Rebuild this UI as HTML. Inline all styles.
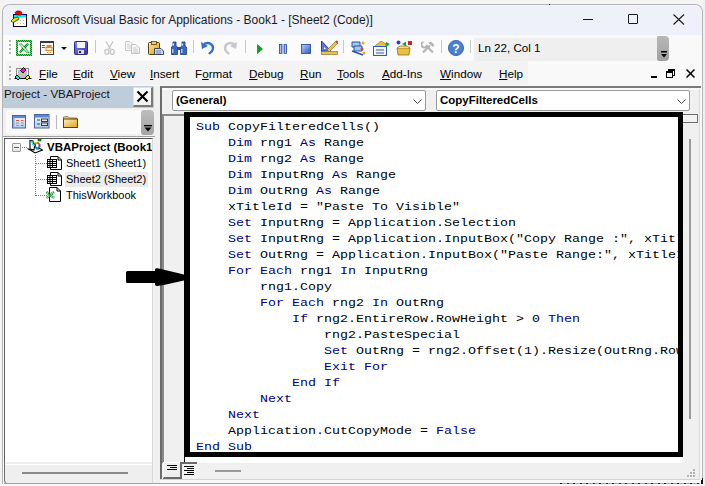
<!DOCTYPE html>
<html><head><meta charset="utf-8">
<style>
*{margin:0;padding:0;box-sizing:border-box}
html,body{width:705px;height:486px;overflow:hidden;background:#f4f4f4;font-family:"Liberation Sans",sans-serif;color:#000;position:relative}
.a{position:absolute}
.t{font-size:12px;white-space:pre;line-height:14px}
.m{font-size:11.7px;white-space:pre;line-height:14px}
.code{font-family:"Liberation Mono",monospace;font-size:13.333px;line-height:16px;white-space:pre;color:#000}
.k{color:#00007f}
.ln{height:16px;transform-origin:0 11px;transform:scaleY(.86)}
.sep{width:1px;height:13px;background:#c8c8c8}
</style></head><body>
<!-- window frame -->
<div class="a" style="left:2px;top:4px;width:701px;height:480px;border:1px solid #b4b4b4;border-bottom:none;border-radius:8px 8px 0 0;background:#f0f0f0"></div>
<div class="a" style="left:3px;top:5px;width:699px;height:30px;background:#eef1f9;border-radius:7px 7px 0 0"></div>
<!-- title -->
<svg class="a" style="left:10px;top:10px" width="18" height="18" viewBox="0 0 18 18"><rect x="3.5" y="4.5" width="13" height="12" fill="#fff" stroke="#000"/><rect x="3" y="4" width="14" height="1" fill="#000080"/><rect x="4" y="5" width="12" height="2.5" fill="#00f0f0"/><path d="M5 2.5 L7 1 L10 1 L12 2.5 L11 5 L6.5 5Z" fill="#f00000" stroke="#400000" stroke-width=".6"/><path d="M1 11 L4 8 L8 7 L9 9 L6 11 L3 12.5Z" fill="#e8e800" stroke="#202000" stroke-width=".7"/><path d="M5 10.5 L8.5 8.5 L9.5 9.5 L6 11.5Z" fill="#808000"/><g fill="#b8b8b8"><rect x="10" y="10" width="1" height="1"/><rect x="13" y="10" width="1" height="1"/><rect x="7" y="13" width="1" height="1"/><rect x="10" y="13" width="1" height="1"/><rect x="13" y="13" width="1" height="1"/></g></svg>
<div class="a t" style="left:31px;top:13px;color:#1a1a1a">Microsoft Visual Basic for Applications - Book1 - [Sheet2 (Code)]</div>
<div class="a" style="left:583px;top:19px;width:10px;height:1px;background:#1a1a1a"></div>
<div class="a" style="left:628px;top:14px;width:10px;height:10px;border:1px solid #1a1a1a;border-radius:1px"></div>
<svg class="a" style="left:673px;top:14px" width="12" height="11" viewBox="0 0 12 11"><path d="M0.5 0.5 L11 10.5 M11 0.5 L0.5 10.5" stroke="#1a1a1a" stroke-width="1.1"/></svg>

<!-- toolbar band -->
<div class="a" style="left:3px;top:35px;width:699px;height:51px;background:#f9f9f9"></div>
<div class="a" style="left:6px;top:37px;width:468px;height:23px;background:#fbfbfb;border-radius:3px"></div>
<div class="a" style="left:6px;top:61px;width:522px;height:24px;background:#f3f3f3;border-radius:2px"></div>
<!-- grips -->
<svg class="a" style="left:9px;top:40px" width="3" height="17"><g fill="#b0b0b0"><rect x="0" y="0" width="2" height="2"/><rect x="0" y="4" width="2" height="2"/><rect x="0" y="8" width="2" height="2"/><rect x="0" y="12" width="2" height="2"/></g></svg>
<svg class="a" style="left:9px;top:66px" width="3" height="17"><g fill="#b0b0b0"><rect x="0" y="0" width="2" height="2"/><rect x="0" y="4" width="2" height="2"/><rect x="0" y="8" width="2" height="2"/><rect x="0" y="12" width="2" height="2"/></g></svg>

<!-- toolbar icons -->
<svg class="a" style="left:16px;top:40px" width="16" height="16" viewBox="0 0 16 16"><defs><pattern id="chk" width="2" height="2" patternUnits="userSpaceOnUse"><rect width="2" height="2" fill="#7cc07c"/><rect width="1" height="1" fill="#008a10"/><rect x="1" y="1" width="1" height="1" fill="#008a10"/></pattern></defs><rect x="0" y="0" width="16" height="16" fill="url(#chk)"/><rect x="2" y="2" width="12" height="12" fill="#fff"/><path d="M3 4 L5 3 L8 6 L11 3 L13 4 L10 8 L13 12 L14 13 L11 13 L8 10 L5 13 L3 12 L6 8Z" fill="url(#chk)"/><path d="M4.5 4.5 L11.5 12" stroke="#fff" stroke-width="1"/></svg>
<svg class="a" style="left:40px;top:41px" width="14" height="14" viewBox="0 0 14 14"><rect x="0.5" y="0.5" width="13" height="13" fill="#f8f8f8" stroke="#3a3a3a"/><rect x="0" y="0" width="14" height="2" fill="#3a3a3a"/><path d="M2 4.5 H5 M2 6.5 H5" stroke="#606060"/><rect x="6.5" y="4" width="5" height="2" fill="#d88a28"/><rect x="6" y="6.5" width="6" height="3" fill="#f8f0e0" stroke="#d88a28"/><path d="M7 11.5 H8.5 M9.5 11.5 H11" stroke="#d88a28"/></svg>
<svg class="a" style="left:61px;top:47px" width="6" height="3"><path d="M0 0 H6 L3 3Z" fill="#111"/></svg>
<svg class="a" style="left:74px;top:41px" width="14" height="14" viewBox="0 0 14 14"><defs><linearGradient id="gs" x1="0" y1="0" x2="1" y2="1"><stop offset="0" stop-color="#8a8ae8"/><stop offset="1" stop-color="#3030a0"/></linearGradient></defs><rect x="0.5" y="0.5" width="13" height="13" rx="1" fill="url(#gs)" stroke="#2a2a80"/><rect x="3" y="1" width="8" height="6" fill="#f4f4fa"/><rect x="4" y="9" width="6" height="4" fill="#d8d8e8"/><rect x="5" y="10" width="2" height="2" fill="#202040"/></svg>
<div class="a sep" style="left:95px;top:40px"></div>
<svg class="a" style="left:104px;top:41px" width="11" height="14" viewBox="0 0 11 14"><path d="M2 0.5 L6.5 8 M9 0.5 L4.5 8" stroke="#c4c4c4" stroke-width="1.3"/><ellipse cx="2.8" cy="10.8" rx="2" ry="2.5" fill="none" stroke="#c4c4c4" stroke-width="1.3"/><ellipse cx="8.2" cy="10.8" rx="2" ry="2.5" fill="none" stroke="#c4c4c4" stroke-width="1.3"/></svg>
<svg class="a" style="left:125px;top:41px" width="15" height="13" viewBox="0 0 15 13"><path d="M0.5 0.5 L5 0.5 L7.5 3 L7.5 9.5 L0.5 9.5Z" fill="#f8f8f8" stroke="#c8c8c8"/><path d="M2 3 H5 M2 5 H6 M2 7 H6" stroke="#d0d0d0"/><path d="M6.5 3.5 L11 3.5 L14.5 7 L14.5 12.5 L6.5 12.5Z" fill="#f8f8f8" stroke="#c0c0c0"/><path d="M8 7 H12 M8 9 H13 M8 11 H13" stroke="#c8c8c8"/></svg>
<svg class="a" style="left:148px;top:41px" width="16" height="14" viewBox="0 0 16 14"><defs><linearGradient id="gp" x1="0" y1="0" x2="1" y2="1"><stop offset="0" stop-color="#fff0a0"/><stop offset="1" stop-color="#d89010"/></linearGradient></defs><rect x="0.5" y="1.5" width="11" height="12" rx="1" fill="url(#gp)" stroke="#5a4010"/><rect x="3.5" y="0.5" width="5" height="3" fill="#e8d080" stroke="#5a4010" stroke-width=".8"/><path d="M6.5 7.5 L13 7.5 L15.5 10 L15.5 13.5 L6.5 13.5Z" fill="#c8d8f0" stroke="#404860"/><path d="M8 10 H13 M8 12 H13" stroke="#6a88b8"/></svg>
<svg class="a" style="left:171px;top:41px" width="16" height="14" viewBox="0 0 16 14"><path d="M2 1 L5 1 L5 5 L6.5 6 L6.5 13.5 L0.5 13.5 L0.5 6 L2 5Z" fill="#3868c0" stroke="#203a80" stroke-width=".8"/><path d="M11 1 L14 1 L14 5 L15.5 6 L15.5 13.5 L9.5 13.5 L9.5 6 L11 5Z" fill="#3868c0" stroke="#203a80" stroke-width=".8"/><rect x="6.5" y="6" width="3" height="3" fill="#2a4a90"/><path d="M2.5 2.5 V4.5 M1.8 8 V12 M11.5 2.5 V4.5 M10.8 8 V12" stroke="#e0ecff" stroke-width="1.1"/></svg>
<div class="a sep" style="left:193px;top:40px"></div>
<svg class="a" style="left:201px;top:41px" width="14" height="14" viewBox="0 0 14 14"><path d="M3 3 C 9 0, 14 5, 11 10 L8 13" fill="none" stroke="#3070c8" stroke-width="2.4"/><path d="M0 1 L1 8 L7 5Z" fill="#3070c8"/></svg>
<svg class="a" style="left:224px;top:41px" width="13" height="14" viewBox="0 0 13 14"><path d="M10 3 C 4 0, -1 5, 2 10 L5 13" fill="none" stroke="#c8c8c8" stroke-width="2.4"/><path d="M13 1 L12 8 L6 5Z" fill="#c8c8c8"/></svg>
<div class="a sep" style="left:245px;top:40px"></div>
<svg class="a" style="left:257px;top:44px" width="6" height="10"><path d="M0.5 0.5 L5.5 5 L0.5 9.5Z" fill="#10a020" stroke="#087010" stroke-width=".6"/></svg>
<svg class="a" style="left:279px;top:44px" width="8" height="10"><defs><linearGradient id="gpz" x1="0" y1="0" x2="1" y2="0"><stop offset="0" stop-color="#2a5ac0"/><stop offset=".5" stop-color="#c8dcff"/><stop offset="1" stop-color="#2a5ac0"/></linearGradient></defs><rect x="0.5" y="0.5" width="2.5" height="9" fill="url(#gpz)" stroke="#2040a0" stroke-width=".7"/><rect x="5" y="0.5" width="2.5" height="9" fill="url(#gpz)" stroke="#2040a0" stroke-width=".7"/></svg>
<svg class="a" style="left:301px;top:44px" width="10" height="10"><defs><linearGradient id="gst" x1="0" y1="0" x2="1" y2="1"><stop offset="0" stop-color="#b8d0ff"/><stop offset="1" stop-color="#2a58c0"/></linearGradient></defs><rect x="0.5" y="0.5" width="9" height="9" fill="url(#gst)" stroke="#2040a0" stroke-width=".8"/></svg>
<svg class="a" style="left:321px;top:40px" width="17" height="15" viewBox="0 0 17 15"><path d="M0.5 1 L0.5 11 L10 11Z" fill="#5a7ad8" stroke="#2040a0"/><path d="M3 7 L3 9 L5 9Z" fill="#fff"/><path d="M6 10 L15 1 L17 3 L8 12Z" fill="#f0c040" stroke="#806020" stroke-width=".6"/><path d="M15 1 L17 3" stroke="#d04040" stroke-width="2"/><rect x="0.5" y="11.5" width="16" height="3" fill="#e8c050" stroke="#806020" stroke-width=".6"/></svg>
<div class="a sep" style="left:343px;top:40px"></div>
<svg class="a" style="left:351px;top:40px" width="15" height="16" viewBox="0 0 15 16"><path d="M1 2 L9 2 L9 7 L1 7Z" fill="#a0c8f0" stroke="#2850a8"/><path d="M3 6 L11 6 L11 11 L3 11Z" fill="#a0c8f0" stroke="#2850a8"/><path d="M1 11 L12 15" stroke="#3050a0" stroke-width="1.5"/><circle cx="12" cy="3" r="1.5" fill="#f0a020"/><circle cx="11" cy="9" r="1.5" fill="#e04020"/><circle cx="13" cy="13" r="1.5" fill="#f0a020"/></svg>
<svg class="a" style="left:373px;top:41px" width="17" height="15" viewBox="0 0 17 15"><rect x="0.5" y="5.5" width="13" height="9" fill="#f4f4f4" stroke="#3060b0"/><path d="M3 9 H11 M3 12 H11" stroke="#3060b0"/><path d="M2 5 L8 0 L13 3 L13 5" fill="#f0c040" stroke="#806020" stroke-width=".6"/><path d="M13 1 L17 3 L13 6Z" fill="#20a040"/></svg>
<svg class="a" style="left:396px;top:40px" width="16" height="16" viewBox="0 0 16 16"><circle cx="2.5" cy="2.5" r="2" fill="#3040c0"/><path d="M6 4 L10 1.5 L10 6.5Z" fill="#20a040"/><rect x="12" y="1" width="4" height="4" fill="#d02020"/><path d="M1 8 L14 8 L13 15 L2 15Z" fill="#e8c040" stroke="#806020" stroke-width=".7"/><path d="M1 8 L4 6 L11 6 L14 8" fill="#f8e080" stroke="#806020" stroke-width=".7"/></svg>
<svg class="a" style="left:421px;top:41px" width="14" height="13" viewBox="0 0 14 13"><path d="M2 11.5 L9 4.5" stroke="#b4b4b4" stroke-width="2.2"/><path d="M12 11.5 L5 4.5" stroke="#b4b4b4" stroke-width="2.2"/><path d="M2.5 1 A2.8 2.8 0 1 0 6 4" fill="none" stroke="#b0b0b0" stroke-width="1.8"/><path d="M7 1.5 L10 0.8 L13.5 4 L12 6 L9 3.5Z" fill="#b4b4b4"/></svg>
<div class="a sep" style="left:441px;top:40px"></div>
<svg class="a" style="left:448px;top:40px" width="16" height="16" viewBox="0 0 16 16"><circle cx="8" cy="8" r="7.6" fill="#4a80d0" stroke="#2a58a8" stroke-width=".8"/><text x="8" y="12.5" font-family="Liberation Sans" font-weight="bold" font-size="12" fill="#fff" text-anchor="middle">?</text></svg>
<div class="a sep" style="left:470px;top:40px"></div>
<!-- status box -->
<div class="a" style="left:474px;top:38px;width:184px;height:23px;background:#efefef"></div>
<div class="a m" style="left:478px;top:41px;font-size:11.6px">Ln 22, Col 1</div>
<div class="a" style="left:657px;top:36px;width:12px;height:25px;background:linear-gradient(#b8b8b8,#a0a0a0);border-radius:1px 4px 4px 2px"></div>
<svg class="a" style="left:661px;top:51px" width="6" height="7"><rect x="0" y="0" width="6" height="1.5" fill="#000"/><path d="M0 3 H6 L3 6.5Z" fill="#000"/></svg>

<!-- menu -->
<svg class="a" style="left:14px;top:67px" width="18" height="15" viewBox="0 0 18 15"><rect x="2.5" y="1.5" width="12" height="10" fill="#fff" stroke="#8a8a8a" stroke-width="1"/><path d="M4 3 L13 3 L13 11 L4 11Z" fill="#c0c0c0"/><path d="M5 11 L12 11 L12 12 L5 12Z" fill="#fff"/><path d="M0.5 11.5 H17.5" stroke="#000" stroke-width="1"/><path d="M6.5 3.5 L9.5 0.5 L12 3 L9 6Z" fill="#ff00ff" stroke="#000" stroke-width=".9"/><path d="M1 10 L3 8 L6 11 L4 13Z" fill="#00f0f0" stroke="#000" stroke-width=".9"/><path d="M11 11 L14 8 L16 10 L13 13Z" fill="#f8f000" stroke="#000" stroke-width=".9"/></svg>
<div class="a m" style="left:39px;top:67px"><u>F</u>ile</div>
<div class="a m" style="left:73px;top:67px"><u>E</u>dit</div>
<div class="a m" style="left:110px;top:67px"><u>V</u>iew</div>
<div class="a m" style="left:150px;top:67px"><u>I</u>nsert</div>
<div class="a m" style="left:195px;top:67px">F<u>o</u>rmat</div>
<div class="a m" style="left:249px;top:67px"><u>D</u>ebug</div>
<div class="a m" style="left:300px;top:67px"><u>R</u>un</div>
<div class="a m" style="left:337px;top:67px"><u>T</u>ools</div>
<div class="a m" style="left:382px;top:67px"><u>A</u>dd-Ins</div>
<div class="a m" style="left:440px;top:67px"><u>W</u>indow</div>
<div class="a m" style="left:499px;top:67px"><u>H</u>elp</div>
<div class="a" style="left:651px;top:76px;width:6px;height:2px;background:#000"></div>
<svg class="a" style="left:666px;top:69px" width="9" height="9"><rect x="2.5" y="0.5" width="6" height="6" fill="none" stroke="#000"/><rect x="0.5" y="2.5" width="6" height="6" fill="#f3f3f3" stroke="#000"/><rect x="0" y="2" width="7" height="2" fill="#000"/><rect x="2" y="0" width="7" height="2" fill="#000"/></svg>
<svg class="a" style="left:686px;top:69px" width="9" height="9"><path d="M0.5 0.5 L8.5 8.5 M8.5 0.5 L0.5 8.5" stroke="#000" stroke-width="1.5"/></svg>

<!-- project pane -->
<div class="a" style="left:3px;top:86px;width:151px;height:22px;background:#bfcdda"></div>
<div class="a m" style="left:4px;top:87px;font-size:11.6px;color:#1a1020">Project - VBAProject</div>
<div class="a" style="left:133px;top:87px;width:20px;height:20px;background:linear-gradient(#fff,#f0f0f0);border:1px solid #e0e0e0;border-right:2px solid #7a7a7a;border-bottom:2px solid #7a7a7a"></div>
<svg class="a" style="left:136px;top:90px" width="13" height="13"><path d="M1.5 1.5 L11.5 11.5 M11.5 1.5 L1.5 11.5" stroke="#000" stroke-width="2.1"/></svg>
<div class="a" style="left:6px;top:110px;width:137px;height:24px;background:#fafafa;border-radius:3px"></div>
<div class="a" style="left:141px;top:110px;width:13px;height:25px;background:linear-gradient(#bdbdbd,#a4a4a4);border-radius:3px 4px 4px 3px"></div>
<svg class="a" style="left:144px;top:125px" width="8" height="7"><rect x="0" y="0" width="8" height="1.3" fill="#000"/><path d="M0.5 2.5 H7.5 L4 6.5Z" fill="#000"/></svg>
<svg class="a" style="left:12px;top:115px" width="15" height="14" viewBox="0 0 15 14"><defs><linearGradient id="gb" x1="0" y1="0" x2="0" y2="1"><stop offset="0" stop-color="#f4f8fe"/><stop offset="1" stop-color="#b8cdec"/></linearGradient></defs><rect x="0.5" y="0.5" width="13" height="12.5" fill="url(#gb)" stroke="#4a64a0"/><rect x="1" y="1" width="12" height="2" fill="#5a88dc"/><rect x="1" y="3" width="1.5" height="9.5" fill="#9aaac0"/><path d="M4 5.5 H7 M9 5.5 H11.5" stroke="#f05028"/><path d="M4 8 H7 M9 8 H11.5" stroke="#7a90b0"/><path d="M4 10.5 H7" stroke="#8a98b0"/><path d="M9 10.5 H11.5" stroke="#f05028"/></svg>
<svg class="a" style="left:34px;top:114px" width="16" height="15" viewBox="0 0 16 15"><rect x="0.5" y="0.5" width="14.5" height="13.5" fill="url(#gb)" stroke="#4a64a0"/><rect x="1" y="1" width="14" height="2.5" fill="#5a88dc"/><path d="M3 6 H6 M3 10 H6" stroke="#404850" stroke-width="1.2"/><rect x="7.5" y="5" width="6" height="2.5" fill="#eee" stroke="#303840"/><rect x="7.5" y="9" width="6" height="2.5" fill="#eee" stroke="#303840"/></svg>
<div class="a sep" style="left:56px;top:115px;height:14px;background:#b8b8b8"></div>
<svg class="a" style="left:63px;top:116px" width="15" height="12" viewBox="0 0 15 12"><defs><linearGradient id="gf" x1="0" y1="0" x2="1" y2="1"><stop offset="0" stop-color="#fff4b0"/><stop offset="1" stop-color="#e0a020"/></linearGradient></defs><path d="M0.5 1 L5 0.5 L6.5 2 L13.5 2 L13.5 3.5 L0.5 3.5Z" fill="#f0d880" stroke="#806020" stroke-width=".8"/><rect x="0.5" y="3" width="14" height="8.5" fill="url(#gf)" stroke="#504020" stroke-width="1"/></svg>

<!-- tree -->
<div class="a" style="left:3px;top:136px;width:1px;height:346px;background:#fafafa"></div>
<div class="a" style="left:3px;top:136px;width:152px;height:1px;background:#a0a0a0"></div>
<div class="a" style="left:4px;top:137px;width:150px;height:1px;background:#fafafa"></div>
<div class="a" style="left:4px;top:138px;width:149px;height:326px;background:#fff;border-top:1px solid #505050;border-left:1px solid #606060;border-right:1px solid #d8d8d8;overflow:hidden">
<div class="a" style="left:42px;top:0.5px;font-size:11.5px;font-weight:bold;white-space:pre;line-height:14px">VBAProject (Book1)</div>
</div>
<div class="a" style="left:4px;top:462px;width:149px;height:22px;background:#efefef;border-left:1px solid #707070;border-bottom:1px solid #a4a4a4;border-right:1px solid #d8d8d8;border-bottom-left-radius:4px"></div>
<div class="a" style="left:5px;top:464px;width:147px;height:1px;background:#fff"></div>
<div class="a" style="left:22px;top:472px;width:106px;height:2px;background:#8a8a8a"></div>
<div class="a" style="left:12px;top:143px;width:9px;height:9px;border:1px solid #9a9a9a;border-radius:1px;background:linear-gradient(#fafafa,#e4e4e4)"></div>
<div class="a" style="left:14px;top:147px;width:5px;height:1px;background:#4060b0"></div>
<svg class="a" style="left:21px;top:147px" width="30" height="56"><g fill="#808080"><rect x="1" y="0" width="1" height="1"/><rect x="3" y="0" width="1" height="1"/><rect x="5" y="0" width="1" height="1"/></g><path d="M14.5 8 V 49" stroke="#808080" stroke-dasharray="1 1"/><path d="M15 16.5 H26 M15 32.5 H26 M15 48.5 H26" stroke="#808080" stroke-dasharray="1 1"/></svg>
<svg class="a" style="left:27px;top:139px" width="16" height="15" viewBox="0 0 16 15"><path d="M0.5 9.5 L5 12 L8 14 L15.5 11 L10 8" fill="#fff" stroke="#000" stroke-width="1.1"/><path d="M3 1.5 L6 2 L6 4 L8 5 L7 11 L3 10Z" fill="#fff" stroke="#000" stroke-width="1.1"/><path d="M3.5 2.5 L6 3.5 M5 5 L8 7 M8 9 L12 11" stroke="#20d8f0" stroke-width="1.4"/><path d="M8 4 L12 4 L12 9 L9 9Z" fill="#fff" stroke="#000" stroke-width=".8"/><rect x="7" y="3" width="3" height="1.5" fill="#e8d020"/><rect x="12" y="5" width="1.5" height="3" fill="#e020d0"/><rect x="11" y="0" width="3" height="2" fill="#20c020" stroke="#000" stroke-width=".5"/></svg>
<div class="a" style="left:65px;top:172px;width:83px;height:15px;background:#ebebeb"></div>
<svg class="a" style="left:46px;top:156px" width="17" height="14" viewBox="0 0 17 14"><path d="M4.5 0.5 L12 0.5 L15.5 4 L15.5 13.5 L4.5 13.5Z" fill="#fff" stroke="#000"/><path d="M12 0.5 L12 4 L15.5 4" fill="none" stroke="#000"/><rect x="1" y="3" width="10" height="9" fill="#fff"/><path d="M1 3.5 H11 M1 5.5 H11 M1 7.5 H11 M1 9.5 H11 M1 11.5 H11 M1.5 3 V12 M4 3 V12 M6.5 3 V12 M10.5 3 V12" stroke="#000" stroke-width="1"/></svg>
<div class="a m" style="left:66px;top:156px;font-size:11px">Sheet1 (Sheet1)</div>
<svg class="a" style="left:46px;top:172px" width="17" height="14" viewBox="0 0 17 14"><path d="M4.5 0.5 L12 0.5 L15.5 4 L15.5 13.5 L4.5 13.5Z" fill="#fff" stroke="#000"/><path d="M12 0.5 L12 4 L15.5 4" fill="none" stroke="#000"/><rect x="1" y="3" width="10" height="9" fill="#fff"/><path d="M1 3.5 H11 M1 5.5 H11 M1 7.5 H11 M1 9.5 H11 M1 11.5 H11 M1.5 3 V12 M4 3 V12 M6.5 3 V12 M10.5 3 V12" stroke="#000" stroke-width="1"/></svg>
<div class="a m" style="left:66px;top:172px;font-size:11px">Sheet2 (Sheet2)</div>
<svg class="a" style="left:45px;top:187px" width="17" height="15" viewBox="0 0 17 15"><path d="M4.5 0.5 L12 0.5 L15.5 4 L15.5 14.5 L4.5 14.5Z" fill="#fff" stroke="#000"/><path d="M12 0.5 L12 4 L15.5 4" fill="none" stroke="#000"/><path d="M1.5 5 L9 11 M9 5 L1.5 11" stroke="#2a9a3a" stroke-width="2.6" stroke-dasharray="1.2 .6"/></svg>
<div class="a m" style="left:66px;top:188px;font-size:11px">ThisWorkbook</div>

<!-- code window frame -->
<div class="a" style="left:160px;top:86px;width:541px;height:394px;border-top:2px solid #7a7a7a;border-left:2px solid #6c6c6c;background:#f0f0f0"></div>
<div class="a" style="left:162px;top:88px;width:539px;height:2px;background:#fafafa"></div>
<div class="a" style="left:172px;top:90px;width:254px;height:21px;background:#fff;border:1px solid #9a9a9a;border-radius:2px"></div>
<div class="a" style="left:176px;top:93px;font-size:11.5px;font-weight:bold;white-space:pre;line-height:14px">(General)</div>
<svg class="a" style="left:413px;top:99px" width="9" height="5"><path d="M0.5 0.5 L4.5 4.5 L8.5 0.5" fill="none" stroke="#444" stroke-width="1"/></svg>
<div class="a" style="left:436px;top:90px;width:254px;height:21px;background:#fff;border:1px solid #9a9a9a;border-radius:2px"></div>
<div class="a" style="left:440px;top:93px;font-size:11.5px;font-weight:bold;white-space:pre;line-height:14px">CopyFilteredCells</div>
<svg class="a" style="left:677px;top:99px" width="9" height="5"><path d="M0.5 0.5 L4.5 4.5 L8.5 0.5" fill="none" stroke="#444" stroke-width="1"/></svg>
<!-- margin + code -->
<div class="a" style="left:162px;top:114px;width:22px;height:349px;border-top:2px solid #8a8a8a;border-left:2px solid #8a8a8a;background:#f0f0f0"></div>
<div class="a" style="left:184px;top:113px;width:499px;height:350px;background:#fff;overflow:hidden">
<div class="a code" style="left:12px;top:6px"><div class="ln"><span class="k">Sub</span> CopyFilteredCells()</div><div class="ln">    <span class="k">Dim</span> rng1 <span class="k">As</span> Range</div><div class="ln">    <span class="k">Dim</span> rng2 <span class="k">As</span> Range</div><div class="ln">    <span class="k">Dim</span> InputRng <span class="k">As</span> Range</div><div class="ln">    <span class="k">Dim</span> OutRng <span class="k">As</span> Range</div><div class="ln">    xTitleId = "Paste To Visible"</div><div class="ln">    <span class="k">Set</span> InputRng = Application.Selection</div><div class="ln">    <span class="k">Set</span> InputRng = Application.InputBox("Copy Range :", xTitleId, InputRng.Address, Type:=8)</div><div class="ln">    <span class="k">Set</span> OutRng = Application.InputBox("Paste Range:", xTitleId, Type:=8)</div><div class="ln">    <span class="k">For Each</span> rng1 <span class="k">In</span> InputRng</div><div class="ln">        rng1.Copy</div><div class="ln">        <span class="k">For Each</span> rng2 <span class="k">In</span> OutRng</div><div class="ln">            <span class="k">If</span> rng2.EntireRow.RowHeight > 0 <span class="k">Then</span></div><div class="ln">                rng2.PasteSpecial</div><div class="ln">                <span class="k">Set</span> OutRng = rng2.Offset(1).Resize(OutRng.Rows.Count)</div><div class="ln">                <span class="k">Exit For</span></div><div class="ln">            <span class="k">End If</span></div><div class="ln">        <span class="k">Next</span></div><div class="ln">    <span class="k">Next</span></div><div class="ln">    Application.CutCopyMode = <span class="k">False</span></div><div class="ln"><span class="k">End Sub</span></div></div>
</div>
<!-- vertical scrollbar -->
<div class="a" style="left:683px;top:113px;width:17px;height:350px;background:#f0f0f0"></div>
<div class="a" style="left:683px;top:114px;width:15px;height:9px;background:#f2f2f2;border:1px solid #6e6e6e;border-left:none"></div>
<div class="a" style="left:689px;top:139px;width:2px;height:280px;background:#9a9a9a"></div>
<!-- bottom bar -->
<div class="a" style="left:184px;top:456px;width:1px;height:6px;background:#000"></div>
<div class="a" style="left:163px;top:462px;width:18px;height:17px;background:#efefef;border-top:1px solid #fafafa;border-left:1px solid #fafafa;border-bottom:2px solid #6a6a6a;border-right:1px solid #d0d0d0"></div>
<svg class="a" style="left:166px;top:464px" width="12" height="8"><path d="M1 1.5 H11 M4 3.5 H11 M1 5.5 H11" stroke="#000" stroke-width="1.1"/></svg>
<div class="a" style="left:180px;top:462px;width:17px;height:17px;background:#f2f2f2;border-top:2px solid #6a6a6a;border-left:2px solid #6a6a6a"></div>
<svg class="a" style="left:183px;top:465px" width="12" height="11"><path d="M1 1.5 H11 M4 3.5 H11 M1 5.5 H11 M4 7.5 H11 M1 9.5 H11" stroke="#000" stroke-width="1.1"/></svg>
<div class="a" style="left:215px;top:470px;width:26px;height:2px;background:#9a9a9a"></div>
<div class="a" style="left:163px;top:478px;width:17px;height:1px;background:#6a6a6a"></div>
<svg class="a" style="left:687px;top:469px" width="9" height="9"><g fill="#b4b4b4"><rect x="6" y="0" width="2" height="2"/><rect x="3" y="3" width="2" height="2"/><rect x="6" y="3" width="2" height="2"/><rect x="0" y="6" width="2" height="2"/><rect x="3" y="6" width="2" height="2"/><rect x="6" y="6" width="2" height="2"/></g></svg>
<div class="a" style="left:160px;top:479px;width:540px;height:1px;background:#d4d4d4"></div>
<div class="a" style="left:155px;top:480px;width:547px;height:3px;background:#fafafa"></div>
<div class="a" style="left:154px;top:462px;width:6px;height:21px;background:#f0f0f0"></div>

<div class="a" style="left:0;top:484px;width:705px;height:2px;background:#fafafa"></div>
<div class="a" style="left:4px;top:483px;width:696px;height:1px;background:#a4a4a4"></div>
<div class="a" style="left:560px;top:483px;width:140px;height:1px;background:repeating-linear-gradient(90deg,#202020 0 2px,transparent 2px 7px,#303030 7px 9px,transparent 9px 13px)"></div>
<div class="a" style="left:701px;top:478px;width:2px;height:6px;background:#111"></div>
<div class="a" style="left:703px;top:0;width:2px;height:486px;background:#f0f0f0"></div>
<div class="a" style="left:699px;top:89px;width:1px;height:390px;background:#d8d8d8"></div>
<div class="a" style="left:700px;top:89px;width:2px;height:391px;background:#fafafa"></div>
<div class="a" style="left:549px;top:4px;width:1px;height:1px;background:#222"></div>
<!-- annotation rectangle -->
<div class="a" style="left:184px;top:112px;width:499px;height:345px;border:5px solid #000;border-left-width:6px"></div>
<!-- arrow -->
<svg class="a" style="left:120px;top:260px" width="72" height="32" viewBox="120 260 72 32"><path d="M126 272.5 Q126 271 127.5 271 L155 271 L155 269.5 Q155.5 268 157.5 268.2 L163 269.4 L186 275 L186 280 L165 284.8 L157 285.9 Q155 286 155 284.5 L155 283 L127.5 283 Q126 283 126 281.5Z" fill="#000"/></svg>
</body></html>
